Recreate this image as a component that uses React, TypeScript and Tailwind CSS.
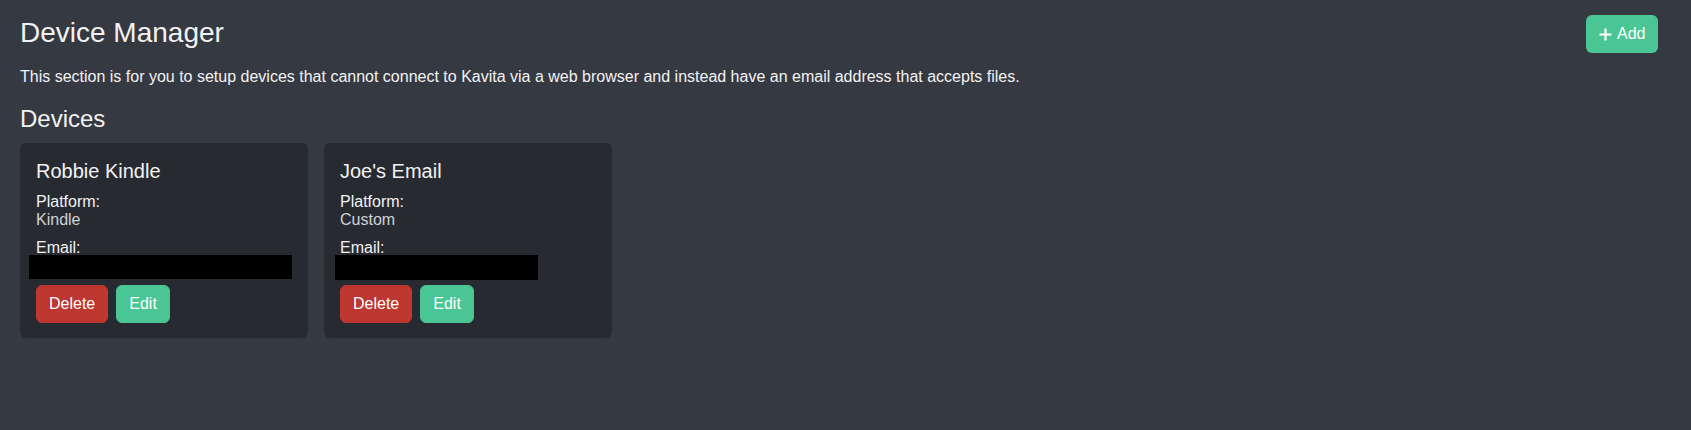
import React from "react";

type Device = { name: string; platform: string; boxLeft: number; boxWidth: number; boxHeight: number };

const devices: Device[] = [
  { name: "Robbie Kindle", platform: "Kindle", boxLeft: 9, boxWidth: 263, boxHeight: 24 },
  { name: "Joe's Email", platform: "Custom", boxLeft: 11, boxWidth: 203, boxHeight: 25 },
];

function PlusIcon() {
  return (
    <svg width="13" height="13" viewBox="0 0 13 13" aria-hidden="true">
      <path d="M6.5 0.5v12M0.5 6.5h12" stroke="currentColor" strokeWidth="2.2" strokeLinecap="butt" />
    </svg>
  );
}

function DeviceCard({ d }: { d: Device }) {
  return (
    <div className="relative w-[288px] rounded-[6px] bg-[#272a31] px-4 pt-4 pb-[15px]">
      <div className="text-[20px] leading-[24px] text-[#f2f2f2]">{d.name}</div>
      <div className="mt-[10px] text-[16px] leading-[18px]">
        <div className="text-[#f2f2f2]">Platform:</div>
        <div className="text-[#cfd2d6]">{d.platform}</div>
      </div>
      <div className="mt-[10px] text-[16px] leading-[18px]">
        <div className="text-[#f2f2f2]">Email:</div>
        <div className="relative h-[18px]">
          <div
            className="absolute top-[-2px] bg-black"
            style={{ left: d.boxLeft - 16, width: d.boxWidth, height: d.boxHeight }}
          />
        </div>
      </div>
      <div className="mt-[10px] flex gap-2">
        <button className="h-[38px] rounded-[6px] border border-[#bd362f] bg-[#bd362f] px-3 text-[16px] text-white">
          Delete
        </button>
        <button className="h-[38px] rounded-[6px] border border-[#4ac694] bg-[#4ac694] px-3 text-[16px] text-white">
          Edit
        </button>
      </div>
    </div>
  );
}

export default function App() {
  return (
    <div
      className="min-h-[430px] w-full bg-[#353942] px-5 text-[#f2f2f2]"
      style={{ fontFamily: '"Liberation Sans", Arial, sans-serif' }}
    >
      <div className="flex items-start justify-between pt-[15px] pr-[13px]">
        <h1 className="mt-[1px] text-[28px] leading-[33.6px] font-normal">Device Manager</h1>
        <button className="flex h-[38px] w-[72px] items-center gap-[5px] rounded-[6px] bg-[#4ac694] pl-[13px] text-[16px] text-white">
          <PlusIcon />
          <span>Add</span>
        </button>
      </div>
      <p className="mt-[12px] text-[16px] leading-[24px]">
        This section is for you to setup devices that cannot connect to Kavita via a web browser and instead have an email address that accepts files.
      </p>
      <h2 className="mt-[16px] text-[24px] leading-[28.8px] font-normal">Devices</h2>
      <div className="mt-[9px] flex gap-4">
        {devices.map((d) => (
          <DeviceCard key={d.name} d={d} />
        ))}
      </div>
    </div>
  );
}
